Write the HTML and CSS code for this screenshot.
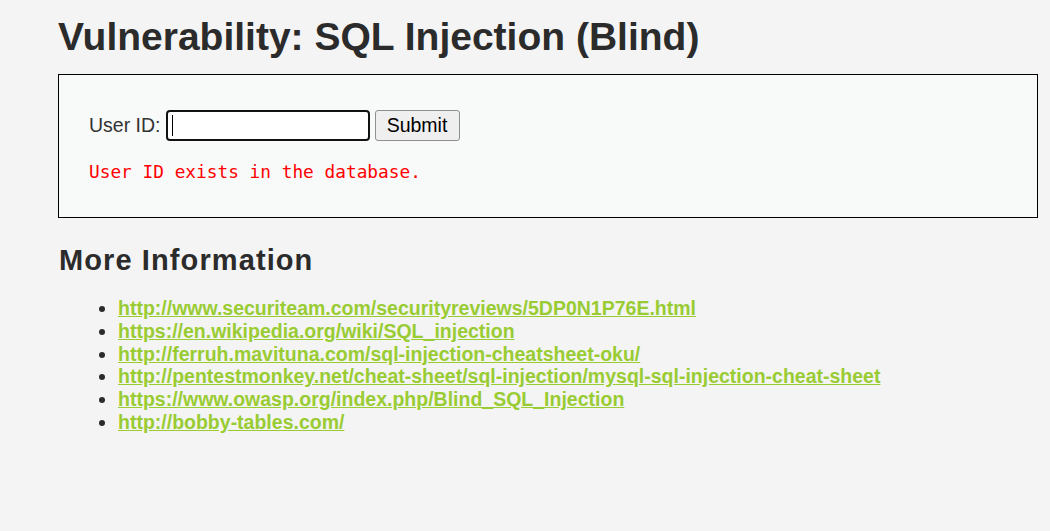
FILE: index.html
```html
<!DOCTYPE html>
<html lang="en">
<head>
<meta charset="utf-8">
<title>Vulnerability: SQL Injection (Blind)</title>
<link rel="stylesheet" href="styles.css">
</head>
<body>
<div class="body-padded">
  <h1 class="page-title">Vulnerability: SQL Injection (Blind)</h1>

  <div class="code-area">
    <form class="id-form" action="#" method="get">
      <label class="id-label" for="user-id">User ID:</label>
      <span class="field-wrap">
        <input class="id-input" id="user-id" type="text" name="id">
        <span class="caret"></span>
      </span>
      <input class="submit-btn" type="submit" value="Submit">
    </form>
    <pre class="result">User ID exists in the database.</pre>
  </div>

  <h2 class="section-title">More Information</h2>
  <ul class="links">
    <li><a href="#">http://www.securiteam.com/securityreviews/5DP0N1P76E.html</a></li>
    <li><a href="#">https://en.wikipedia.org/wiki/SQL_injection</a></li>
    <li><a href="#">http://ferruh.mavituna.com/sql-injection-cheatsheet-oku/</a></li>
    <li><a href="#">http://pentestmonkey.net/cheat-sheet/sql-injection/mysql-sql-injection-cheat-sheet</a></li>
    <li><a href="#">https://www.owasp.org/index.php/Blind_SQL_Injection</a></li>
    <li><a href="#">http://bobby-tables.com/</a></li>
  </ul>
</div>
</body>
</html>
```

FILE: styles.css
```css
html, body {
  margin: 0;
  padding: 0;
  background: #f4f4f4;
}

body {
  font-family: "Liberation Sans", Arial, Helvetica, sans-serif;
  font-size: 19.5px;
  color: #2b2b2b;
}

.body-padded {
  padding: 0 12px 40px 58px;
}

.page-title {
  font-size: 39px;
  font-weight: bold;
  line-height: 45px;
  margin: 14px 0 15px 0;
  color: #2b2b2b;
}

.code-area {
  background: #f8f9f9;
  border: 1px solid #000;
  padding: 35px 30px 35px;
}

.id-form {
  display: flex;
  align-items: center;
  height: 31px;
  margin: 0;
}

.id-label {
  color: #333;
  margin-right: 5px;
}

.field-wrap {
  position: relative;
  display: inline-flex;
}

.id-input {
  box-sizing: border-box;
  width: 204px;
  height: 31px;
  margin: 0;
  padding: 0 6px;
  border: 2px solid #111;
  border-radius: 4px;
  background: #fff;
  outline: none;
  font: inherit;
}

.caret {
  position: absolute;
  left: 6px;
  top: 5px;
  width: 1px;
  height: 21px;
  background: #000;
}

.submit-btn {
  box-sizing: border-box;
  width: 85px;
  height: 31px;
  margin: 0 0 0 5px;
  padding: 0;
  border: 1px solid #8f8f8f;
  border-radius: 3px;
  background: #efefef;
  color: #000;
  font-family: "Liberation Sans", Arial, sans-serif;
  font-size: 19.5px;
}

.result {
  margin: 20px 0 0;
  font-family: "DejaVu Sans Mono", "Liberation Mono", monospace;
  font-size: 17.8px;
  line-height: 21px;
  color: #ff0000;
}

.section-title {
  font-size: 29px;
  font-weight: bold;
  line-height: 33px;
  letter-spacing: 1.1px;
  margin: 26px 0 20px 1px;
  color: #2b2b2b;
}

.links {
  margin: 0;
  padding-left: 60px;
  line-height: 22.8px;
}

.links a {
  color: #99cc33;
  font-weight: bold;
  text-decoration: underline;
}
```
